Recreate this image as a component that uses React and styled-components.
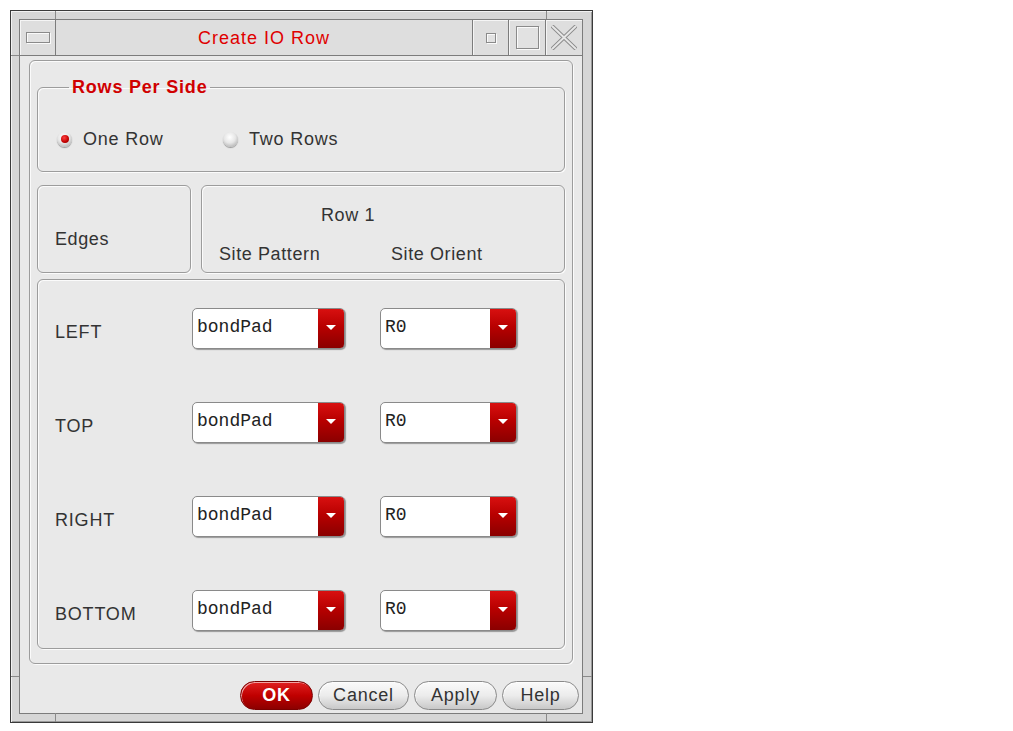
import React from 'react';
import styled, { createGlobalStyle } from 'styled-components';

const GlobalStyle = createGlobalStyle`
  body {
    margin: 0;
    background: #ffffff;
    font-family: "Liberation Sans", Arial, sans-serif;
  }
`;

const Window = styled.div`
  position: relative;
  box-sizing: border-box;
  margin: 10px 0 0 10px;
  width: 583px;
  height: 713px;
  border: 1px solid #3a3a3a;
  padding: 8px 9px 8px 8px;
  background: #d6d6d6;
  box-shadow: inset 1px 1px 0 #f2f2f2, inset -1px -1px 0 #9a9a9a;
  display: flex;
`;

const FrameMark = styled.div`
  position: absolute;
  left: ${p => p.$x}px;
  top: ${p => p.$y}px;
  width: ${p => p.$w}px;
  height: ${p => p.$h}px;
  background: #8a8a8a;
`;

const Inner = styled.div`
  flex: 1;
  display: flex;
  flex-direction: column;
  border: 1px solid #7c7c7c;
  background: #e9e9e9;
`;

const TitleBar = styled.div`
  display: flex;
  height: 35px;
  border-bottom: 1px solid #7c7c7c;
  background: #dedede;
`;

const TitleCell = styled.div`
  width: ${p => p.$w}px;
  display: flex;
  align-items: center;
  justify-content: center;
  border-left: ${p => (p.$left ? '1px solid #7c7c7c' : 'none')};
  border-right: ${p => (p.$right ? '1px solid #7c7c7c' : 'none')};
  box-shadow: inset 1px 1px 0 #f5f5f5;
`;

const MenuGlyph = styled.div`
  width: 22px;
  height: 9px;
  border: 1px solid #8a8a8a;
  box-shadow: inset 1px 1px 0 #fafafa, 1px 1px 0 #fafafa;
  background: #e2e2e2;
`;

const MinGlyph = styled.div`
  width: 8px;
  height: 8px;
  border: 1px solid #8a8a8a;
  box-shadow: inset 1px 1px 0 #fafafa, 1px 1px 0 #fafafa;
  background: #e2e2e2;
`;

const MaxGlyph = styled.div`
  width: 21px;
  height: 21px;
  border: 1px solid #8a8a8a;
  box-shadow: inset 1px 1px 0 #fafafa, 1px 1px 0 #fafafa;
  background: #e2e2e2;
`;

const Title = styled.div`
  flex: 1;
  display: flex;
  align-items: center;
  justify-content: center;
  color: #e00000;
  font-size: 18px;
  letter-spacing: 1px;
  padding-top: 1px;
`;

const Content = styled.div`
  flex: 1;
  display: flex;
  flex-direction: column;
  padding: 4px 9px 2px 9px;
`;

const OuterGroup = styled.div`
  display: flex;
  flex-direction: column;
  height: 604px;
  box-sizing: border-box;
  border: 1px solid #9c9c9c;
  border-radius: 6px;
  box-shadow: inset 1px 1px 0 #fbfbfb, 1px 1px 0 #fbfbfb;
  padding: 16px 7px 14px 7px;
`;

const Group = styled.fieldset`
  margin: 0;
  padding: 32px 0 22px 19px;
  border: 1px solid #9c9c9c;
  border-radius: 6px;
  box-shadow: inset 1px 1px 0 #fbfbfb, 1px 1px 0 #fbfbfb;
`;

const Legend = styled.legend`
  margin-left: 12px;
  padding: 0 3px;
  line-height: 20px;
  color: #d00000;
  font-size: 18px;
  font-weight: bold;
  letter-spacing: 0.8px;
`;

const RadioRow = styled.div`
  display: flex;
  align-items: center;
  height: 20px;
`;

const RadioOption = styled.label`
  display: flex;
  align-items: center;
  gap: 11px;
  min-width: ${p => p.$w || 0}px;
  font-size: 18px;
  letter-spacing: 0.8px;
  color: #333;
`;

const RadioDot = styled.span`
  position: relative;
  width: 15px;
  height: 15px;
  border-radius: 50%;
  background: radial-gradient(circle at 45% 35%, #ffffff 0%, #e6e6e6 45%, #9a9a9a 100%);
  box-shadow: 0 1px 1px rgba(0, 0, 0, 0.35);

  &::after {
    content: '';
    display: ${p => (p.$checked ? 'block' : 'none')};
    position: absolute;
    left: 4px;
    top: 3px;
    width: 8px;
    height: 8px;
    border-radius: 50%;
    background: radial-gradient(circle at 40% 35%, #ff4040, #c00000 60%, #800000);
  }
`;

const HeaderRow = styled.div`
  display: grid;
  grid-template-columns: 154px 1fr;
  column-gap: 10px;
  margin-top: 13px;
  height: 88px;
`;

const Box = styled.div`
  box-sizing: border-box;
  border: 1px solid #9c9c9c;
  border-radius: 6px;
  box-shadow: inset 1px 1px 0 #fbfbfb, 1px 1px 0 #fbfbfb;
`;

const EdgesBox = styled(Box)`
  display: flex;
  align-items: center;
  padding: 21px 0 0 17px;
  font-size: 18px;
  letter-spacing: 0.6px;
  color: #333;
`;

const SiteBox = styled(Box)`
  display: flex;
  flex-direction: column;
  padding: 19px 0 0 17px;
  font-size: 18px;
  letter-spacing: 0.6px;
  color: #333;
`;

const RowTitle = styled.div`
  line-height: 20px;
  padding-left: 102px;
`;

const SubHeads = styled.div`
  display: grid;
  grid-template-columns: 172px auto;
  line-height: 20px;
  margin-top: 19px;
`;

const BodyBox = styled(Box)`
  flex: 1;
  margin-top: 6px;
  padding: 28px 0 16px 17px;
  display: grid;
  grid-template-columns: 137px 188px auto;
  grid-auto-rows: 41px;
  row-gap: 53px;
`;

const EdgeLabel = styled.div`
  display: flex;
  align-items: center;
  padding-top: 7px;
  font-size: 18px;
  letter-spacing: 0.8px;
  color: #333;
`;

const Combo = styled.div`
  display: flex;
  width: ${p => p.$w}px;
  height: 41px;
  box-sizing: border-box;
  border: 1px solid #8a8a8a;
  border-radius: 5px;
  background: #ffffff;
  box-shadow: 1px 1px 1px rgba(0, 0, 0, 0.35);
  overflow: hidden;
`;

const ComboText = styled.div`
  flex: 1;
  display: flex;
  align-items: center;
  padding: 0 0 3px 4px;
  font-family: "Liberation Mono", "Courier New", monospace;
  font-size: 18px;
  color: #222;
`;

const ComboArrow = styled.div`
  width: 26px;
  display: flex;
  align-items: center;
  justify-content: center;
  background: linear-gradient(180deg, #d81010 0%, #b80000 45%, #8a0000 100%);

  &::after {
    content: '';
    width: 0;
    height: 0;
    border-left: 5px solid transparent;
    border-right: 5px solid transparent;
    border-top: 5px solid #ffffff;
    margin-top: -2px;
  }
`;

const ButtonRow = styled.div`
  display: flex;
  justify-content: flex-end;
  gap: 5px;
  margin: 17px -6px 0 0;
`;

const Button = styled.button`
  width: ${p => p.$w}px;
  height: 29px;
  border-radius: 15px;
  font-family: "Liberation Sans", Arial, sans-serif;
  font-size: 18px;
  letter-spacing: 0.8px;
  padding: 0;
  color: ${p => (p.$primary ? '#ffffff' : '#333')};
  font-weight: ${p => (p.$primary ? 'bold' : 'normal')};
  border: 1px solid ${p => (p.$primary ? '#7a0000' : '#8a8a8a')};
  background: ${p =>
    p.$primary
      ? 'linear-gradient(180deg, #e02020 0%, #c00000 50%, #8c0000 100%)'
      : 'linear-gradient(180deg, #fafafa 0%, #ececec 50%, #c8c8c8 100%)'};
  box-shadow: inset 1px 1px 0 rgba(255, 255, 255, 0.6);
`;

const edges = ['LEFT', 'TOP', 'RIGHT', 'BOTTOM'];

const CloseIcon = () => (
  <svg width="26" height="25" viewBox="0 0 26 25">
    <path d="M1 1 L25 24 M25 1 L1 24" stroke="#8a8a8a" strokeWidth="4" />
    <path d="M1 1 L25 24 M25 1 L1 24" stroke="#e6e6e6" strokeWidth="2" />
  </svg>
);

const App = () => (
  <>
    <GlobalStyle />
    <Window>
      <FrameMark $x={44} $y={0} $w={1} $h={8} />
      <FrameMark $x={535} $y={0} $w={1} $h={8} />
      <FrameMark $x={0} $y={44} $w={8} $h={1} />
      <FrameMark $x={0} $y={665} $w={8} $h={1} />
      <FrameMark $x={572} $y={665} $w={9} $h={1} />
      <FrameMark $x={44} $y={702} $w={1} $h={9} />
      <FrameMark $x={535} $y={702} $w={1} $h={9} />
      <Inner>
        <TitleBar>
          <TitleCell $w={35} $right>
            <MenuGlyph />
          </TitleCell>
          <Title>Create IO Row</Title>
          <TitleCell $w={35} $left>
            <MinGlyph />
          </TitleCell>
          <TitleCell $w={36} $left>
            <MaxGlyph />
          </TitleCell>
          <TitleCell $w={36} $left>
            <CloseIcon />
          </TitleCell>
        </TitleBar>
        <Content>
          <OuterGroup>
            <Group>
              <Legend>Rows Per Side</Legend>
              <RadioRow>
                <RadioOption $w={166}>
                  <RadioDot $checked />
                  One Row
                </RadioOption>
                <RadioOption>
                  <RadioDot />
                  Two Rows
                </RadioOption>
              </RadioRow>
            </Group>
            <HeaderRow>
              <EdgesBox>Edges</EdgesBox>
              <SiteBox>
                <RowTitle>Row 1</RowTitle>
                <SubHeads>
                  <span>Site Pattern</span>
                  <span>Site Orient</span>
                </SubHeads>
              </SiteBox>
            </HeaderRow>
            <BodyBox>
              {edges.map(edge => (
                <React.Fragment key={edge}>
                  <EdgeLabel>{edge}</EdgeLabel>
                  <Combo $w={153}>
                    <ComboText>bondPad</ComboText>
                    <ComboArrow />
                  </Combo>
                  <Combo $w={137}>
                    <ComboText>R0</ComboText>
                    <ComboArrow />
                  </Combo>
                </React.Fragment>
              ))}
            </BodyBox>
          </OuterGroup>
          <ButtonRow>
            <Button $primary $w={73}>OK</Button>
            <Button $w={91}>Cancel</Button>
            <Button $w={83}>Apply</Button>
            <Button $w={77}>Help</Button>
          </ButtonRow>
        </Content>
      </Inner>
    </Window>
  </>
);

export default App;
